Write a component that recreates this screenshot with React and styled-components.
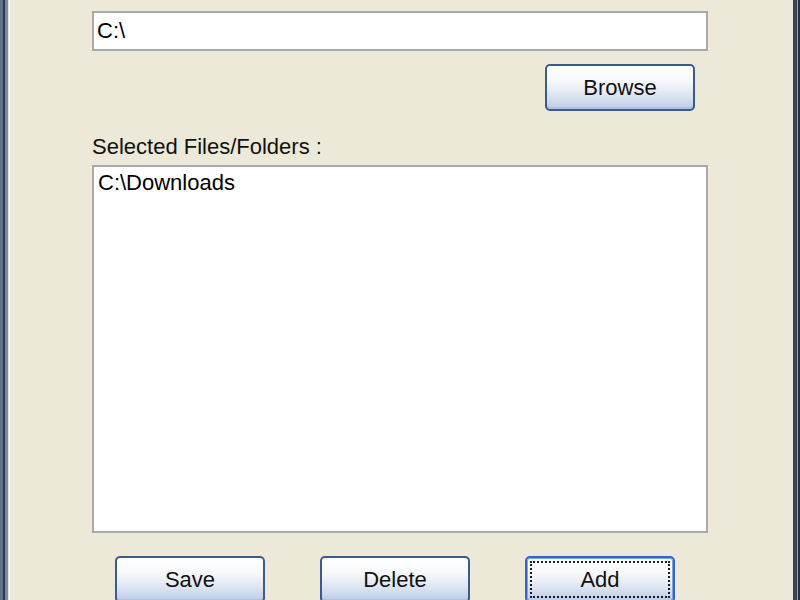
import React from "react";
import styled, { createGlobalStyle, css } from "styled-components";

const Global = createGlobalStyle`
  html, body { margin: 0; padding: 0; background: #ece9d8; }
  body { font-family: "Liberation Sans", Arial, sans-serif; }
`;

const Window = styled.div`
  display: flex;
  width: 800px;
  height: 600px;
  overflow: hidden;
  background: #ece9d8;
`;

const Edge = styled.div`
  flex: 0 0 ${(p) => (p.$side === "left" ? 10 : 7)}px;
  ${(p) =>
    p.$side === "left"
      ? css`
          background: linear-gradient(
            to right,
            #65738a 0px, #65738a 3px,
            #2e3649 3px, #2e3649 5px,
            #7d8aa2 5px, #7d8aa2 8px,
            #dfe2e6 8px, #dfe2e6 9px,
            #fbfbf7 9px, #fbfbf7 10px
          );
        `
      : css`
          background: linear-gradient(
            to right,
            #3a4256 0px, #3a4256 4px,
            #9aa3b3 4px, #9aa3b3 5px,
            #283041 5px, #283041 7px
          );
        `}
`;

const Content = styled.div`
  flex: 1;
  display: flex;
  flex-direction: column;
  padding: 11px 85px 0 82px;
  & > * { flex-shrink: 0; }
`;

const TextField = styled.div`
  box-sizing: border-box;
  height: 40px;
  border: 2px solid #a9a9a9;
  background: #ffffff;
  padding: 5px 4px 0 3px;
  font-size: 22px;
  color: #000;
`;

const ActionRow = styled.div`
  display: flex;
  justify-content: ${(p) => p.$justify || "flex-start"};
  gap: 55px;
  margin-top: ${(p) => p.$top}px;
  padding: 0 ${(p) => p.$right || 0}px 0 ${(p) => p.$left || 0}px;
`;

const Button = styled.div`
  box-sizing: border-box;
  flex: 0 0 150px;
  height: 47px;
  display: flex;
  align-items: center;
  justify-content: center;
  border: 2px solid #3b5a8e;
  border-radius: 5px;
  background: linear-gradient(
    to bottom,
    #ffffff 0%,
    #f7f8fb 35%,
    #e0e7f3 65%,
    #bccbe6 100%
  );
  box-shadow: inset 0 -2px 0 #aebfdf;
  font-size: 22px;
  color: #111;
  position: relative;
  ${(p) =>
    p.$focused &&
    css`
      border-color: #3565c8;
      box-shadow: inset 0 0 0 1px #7ea3e8;
      &::after {
        content: "";
        position: absolute;
        inset: 3px;
        border: 2px dotted #1a1a1a;
      }
    `}
`;

const Label = styled.div`
  margin-top: 23px;
  font-size: 22px;
  line-height: 25px;
  color: #111;
`;

const ListBox = styled.div`
  box-sizing: border-box;
  margin-top: 6px;
  height: 368px;
  border: 2px solid #a9a9a9;
  background: #ffffff;
  padding: 3px 4px 0 4px;
`;

const ListItem = styled.div`
  font-size: 22px;
  line-height: 25px;
  color: #000;
`;

export default function App() {
  return (
    <>
      <Global />
      <Window>
        <Edge $side="left" />
        <Content>
          <TextField>C:\</TextField>
          <ActionRow $justify="flex-end" $top={13} $right={13}>
            <Button>Browse</Button>
          </ActionRow>
          <Label>Selected Files/Folders :</Label>
          <ListBox>
            <ListItem>C:\Downloads</ListItem>
          </ListBox>
          <ActionRow $top={23} $left={23}>
            <Button>Save</Button>
            <Button>Delete</Button>
            <Button $focused>Add</Button>
          </ActionRow>
        </Content>
        <Edge $side="right" />
      </Window>
    </>
  );
}
